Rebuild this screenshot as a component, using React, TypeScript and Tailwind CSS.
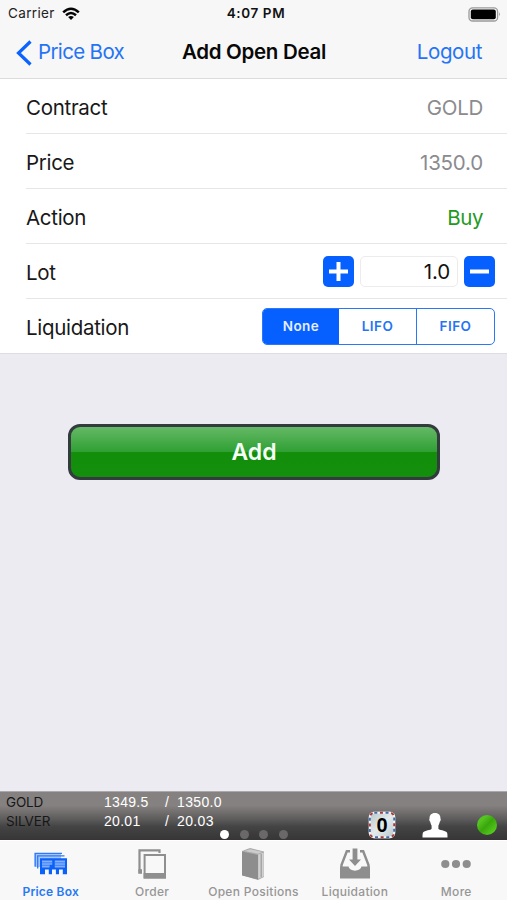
import { type ReactNode } from 'react';

const details = [
  { label: 'Contract', value: 'GOLD', color: 'text-[#8b8b8f]', tracking: 'tracking-[-0.3px]' },
  { label: 'Price', value: '1350.0', color: 'text-[#8b8b8f]', tracking: 'tracking-[-0.2px]' },
  { label: 'Action', value: 'Buy', color: 'text-[#1f9a1f]', tracking: 'tracking-[-0.4px]' },
];

const quotes = [
  { name: 'GOLD', bid: '1349.5', ask: '1350.0' },
  { name: 'SILVER', bid: '20.01', ask: '20.03' },
];

function StatusBar() {
  return (
    <div className="grid h-[27px] grid-cols-3 items-center pt-px pr-[6px] pl-2 text-[13.5px] leading-none">
      <div className="flex items-center gap-[7px]">
        <span className="tracking-[0.35px] text-[#222]">Carrier</span>
        <svg width="18" height="14" viewBox="0 0 18 14" fill="none" stroke="#050505" strokeWidth="2.5">
          <path d="M1.2 5.3 Q9 -1.8 16.8 5.3" />
          <path d="M4 8.2 Q9 3.8 14 8.2" />
          <path d="M9 13 L6.1 10.1 Q9 7.8 11.9 10.1 Z" fill="#050505" stroke="none" />
        </svg>
      </div>
      <span className="pl-[3px] text-center font-semibold tracking-[0.6px] whitespace-nowrap text-[#111]">4:07 PM</span>
      <svg className="justify-self-end" width="33" height="15" viewBox="0 0 33 15">
        <rect x="1" y="0.8" width="28.6" height="13.2" rx="3.6" fill="#f7f7f7" stroke="#9b9b9b" strokeWidth="1.3" />
        <rect x="2.8" y="2.6" width="25" height="9.6" rx="2" fill="#000" />
        <path d="M31 5.2 Q32.8 7.4 31 9.6 Z" fill="#777" />
      </svg>
    </div>
  );
}

function NavBar() {
  return (
    <div className="grid h-[52px] grid-cols-[160px_1fr_160px] items-center border-b border-[#dcdcdd] text-[20.5px] leading-none text-[#2474f5]">
      <div className="flex items-center gap-[6px] pl-4">
        <svg width="16" height="26" viewBox="0 0 16 26" fill="none" stroke="#0a63ff" strokeWidth="3.2">
          <path d="M14.5 1.5 L2.5 13 L14.5 24.5" />
        </svg>
        <span className="whitespace-nowrap tracking-[-0.65px]">Price Box</span>
      </div>
      <h1 className="pl-px text-center font-semibold whitespace-nowrap tracking-[-0.3px] text-[#080808]">Add Open Deal</h1>
      <span className="pr-[25px] text-right tracking-[-0.4px]">Logout</span>
    </div>
  );
}

function Row({ label, last, children }: { label: string; last?: boolean; children: ReactNode }) {
  return (
    <div className={`ml-[26px] flex h-[55px] items-center justify-between ${last ? '' : 'border-b border-[#e6e6e8]'}`}>
      <span className={`text-[20.5px] tracking-[-0.3px] text-[#181818] ${last ? 'pt-[3px]' : 'pt-[5px]'}`}>{label}</span>
      {children}
    </div>
  );
}

function StepButton({ minus }: { minus?: boolean }) {
  return (
    <button className="flex size-[31px] items-center justify-center rounded-[5px] bg-[#0660ff]">
      <svg width="19" height="19" viewBox="0 0 19 19" stroke="#fff" strokeWidth="4">
        <path d="M0 9.5 H19" />
        {!minus && <path d="M9.5 0 V19" />}
      </svg>
    </button>
  );
}

function Ticker() {
  return (
    <div className="relative h-[49px] border-t border-[#aaa8aa] bg-[linear-gradient(#858180_0%,#858180_28%,#5b5959_58%,#444_72%,#373535_100%)] font-['Liberation_Sans',sans-serif] text-[14px]">
      {quotes.map((q) => (
        <div key={q.name} className="grid h-[18.5px] grid-cols-[98px_61px_12px_60px] items-center pt-[2px] pl-[6px] leading-[16px] text-white">
          <span className="font-['Inter',sans-serif] text-[13.5px] tracking-[-0.15px] text-[#171717]">{q.name}</span>
          <span className="tracking-[0.3px]">{q.bid}</span>
          <span>/</span>
          <span className="tracking-[0.35px]">{q.ask}</span>
        </div>
      ))}
      {/* page dots and session indicators float over the quotes */}
      <div className="absolute top-[38px] left-[220px] flex gap-[10.5px]">
        <i className="size-[9px] rounded-full bg-white" />
        <i className="size-[9px] rounded-full bg-[#6a6868]" />
        <i className="size-[9px] rounded-full bg-[#6a6868]" />
        <i className="size-[9px] rounded-full bg-[#6a6868]" />
      </div>
      <div className="absolute top-[19px] right-[10px] flex items-center">
        <div className="relative mr-[26px] flex size-[28px] items-center justify-center">
          <svg className="absolute inset-0" width="28" height="28" viewBox="0 0 28 28">
            <defs>
              <linearGradient id="mail" x1="0" y1="0" x2="1" y2="1">
                <stop offset="0" stopColor="#b4c4c6" />
                <stop offset="0.5" stopColor="#e4eaec" />
                <stop offset="1" stopColor="#b8c5c9" />
              </linearGradient>
            </defs>
            <rect x="0.8" y="0.8" width="26.4" height="26.4" rx="5" fill="url(#mail)" />
            <rect x="1.8" y="1.8" width="24.4" height="24.4" rx="4.5" fill="none" stroke="#f1f4f5" strokeWidth="2" />
            <rect x="1.8" y="1.8" width="24.4" height="24.4" rx="4.5" fill="none" stroke="#4669a8" strokeWidth="2" strokeDasharray="3 8.25" />
            <rect x="1.8" y="1.8" width="24.4" height="24.4" rx="4.5" fill="none" stroke="#a83a3f" strokeWidth="2" strokeDasharray="3 8.25" strokeDashoffset="5.6" />
          </svg>
          <span className="relative font-['Liberation_Sans',sans-serif] text-[20px] leading-none font-bold text-black">0</span>
        </div>
        <svg className="mr-[29px]" width="26" height="26" viewBox="0 0 26 26" fill="#fff">
          <path d="M13 1 C9.2 1 7.4 3.3 7.6 6.6 C6.9 7 7.3 9.4 8.2 9.8 C8.6 11.7 9.2 12.9 9.6 13.5 V16.7 C9 18.4 2.8 18 1 20.6 C.5 21.6 .5 24 .5 25.5 H25.5 C25.5 24 25.5 21.6 25 20.6 C23.2 18 17 18.4 16.4 16.7 V13.5 C16.8 12.9 17.4 11.7 17.8 9.8 C18.7 9.4 19.1 7 18.4 6.6 C18.6 3.3 16.8 1 13 1 Z" />
        </svg>
        <span className="size-[20px] rounded-full bg-[linear-gradient(135deg,#54c420_25%,#3aa60c_50%,#55cb1e_85%)]" />
      </div>
    </div>
  );
}

function PriceBoxIcon() {
  return (
    <svg width="34" height="32" viewBox="0 0 34 32" fill="none">
      <path d="M0.5 5 H27 V11 H6 V19 H0.5 Z" fill="#a4c5fb" />
      <path d="M1.2 18.5 V5.4 H28 M3.7 20.5 V7.9 H30.5" stroke="#2f78f8" strokeWidth="1.3" />
      <path d="M6 10.3 H33 V26.3 H28.8 V21.5 H25 V26.3 H21.9 V21.5 H18 V26.3 H14.8 V21.5 H11 V26.3 H6 Z" fill="#0a62f8" />
      <path d="M8 12.5 H18.2 V16.7 H15.5 V19.5 H8 Z M20.8 12.5 H31 V19.5 H20.8 Z" fill="#82aefb" />
      <path d="M8 14.8 H18.2 M8 17.3 H15.5 M20.8 14.8 H31 M20.8 17.3 H31" stroke="#2f78f8" strokeWidth="0.8" />
    </svg>
  );
}

function OrderIcon() {
  return (
    <svg width="28" height="32" viewBox="0 0 28 32" fill="none" stroke="#8f8f8f">
      <path d="M4 24.5 H1.5 V2.3 H21.5 V5" strokeWidth="2.2" />
      <path d="M0.4 21.2 H4 V25.6 H0.4 Z" fill="#8f8f8f" stroke="none" />
      <rect x="6.6" y="7" width="20.4" height="22.5" fill="#f8f8f8" strokeWidth="2" />
      <path d="M5.6 25 H28 V30.5 H5.6 Z" fill="#8f8f8f" stroke="none" />
    </svg>
  );
}

function BookIcon() {
  return (
    <svg width="24" height="34" viewBox="0 0 24 34">
      <path d="M1 4 L9 1 L23 4.5 V30 L17 33 L1 28 Z" fill="#aaa" />
      <path d="M3.5 4 L9 2.2 L21.5 5 L17 6.7 Z" fill="#ccc" />
      <path d="M17.2 7.5 L22.8 5.5 V29.4 L17.2 31.8 Z" fill="#d0d0d0" />
      <path d="M20.2 6.7 V30.3" stroke="#999" strokeWidth="1.1" />
      <path d="M1 4.4 L17 8 V32.5 L1 28.5 Z" fill="#8d8d8d" />
    </svg>
  );
}

function TrayIcon() {
  return (
    <svg width="30" height="32" viewBox="0 0 30 32" fill="#8e8e8e">
      <path d="M10 3.2 H6.8 L1.5 17 V23 M20 3.2 H23.2 L28.5 17 V23" fill="none" stroke="#8e8e8e" strokeWidth="2.4" />
      <path d="M0 18.5 H8.6 C9.6 24 20.4 24 21.4 18.5 H30 V30.5 H0 Z" />
      <path d="M12.6 0.5 H17.4 V11.5 H21 L15 18 L9 11.5 H12.6 Z" />
    </svg>
  );
}

function MoreIcon() {
  return (
    <svg width="30" height="10" viewBox="0 0 30 10" fill="#8e8e8e">
      <circle cx="4.3" cy="5" r="4.1" />
      <circle cx="15" cy="5" r="4.1" />
      <circle cx="25.7" cy="5" r="4.1" />
    </svg>
  );
}

const tabs = [
  { label: 'Price Box', icon: PriceBoxIcon },
  { label: 'Order', icon: OrderIcon },
  { label: 'Open Positions', icon: BookIcon },
  { label: 'Liquidation', icon: TrayIcon },
  { label: 'More', icon: MoreIcon },
];

function TabBar() {
  return (
    <nav className="grid h-[60px] grid-cols-5 border-t border-white bg-[#f8f8f8]">
      {tabs.map((tab, index) => (
        <div key={tab.label} className="flex flex-col items-center pt-[6px]">
          <div className="flex h-[34px] items-center">
            <tab.icon />
          </div>
          <span className={`mt-[2px] text-[12px] leading-[18px] whitespace-nowrap ${index === 0 ? 'font-semibold tracking-[0.2px] text-[#2878f5]' : 'font-medium tracking-[0.3px] text-[#969696]'}`}>
            {tab.label}
          </span>
        </div>
      ))}
    </nav>
  );
}

export default function App() {
  return (
    <div className="flex h-[900px] w-[507px] flex-col overflow-hidden bg-[#ebebf1] font-['Inter',sans-serif]">
      <header className="bg-[#f7f7f7]">
        <StatusBar />
        <NavBar />
      </header>
      <section className="h-[275px] border-b border-[#dedee2] bg-white">
        {details.map((item) => (
          <Row key={item.label} label={item.label}>
            <span className={`pt-[5px] pr-[24px] text-[20.5px] ${item.tracking} ${item.color}`}>{item.value}</span>
          </Row>
        ))}
        <Row label="Lot">
          <div className="flex items-center gap-[6px] pr-3">
            <StepButton />
            <div className="flex h-[31px] w-[98px] items-center justify-end rounded-[5px] border border-[#ececee] pt-[2px] pr-[7px] text-[20.5px] tracking-[-0.1px] text-[#111]">
              1.0
            </div>
            <StepButton minus />
          </div>
        </Row>
        <Row label="Liquidation" last>
          <div className="mr-3 grid h-[37px] w-[233px] grid-cols-[76px_77px_78px] overflow-hidden rounded-[5px] border border-[#2b78f5] text-center text-[13.5px] leading-[35px] font-semibold tracking-[0.5px] text-[#2474f5]">
            <span className="bg-[#0660ff] text-[#e4eeff]">None</span>
            <span>LIFO</span>
            <span className="border-l border-[#2b78f5]">FIFO</span>
          </div>
        </Row>
      </section>
      <main className="flex-1 pt-[70px] pr-[67px] pl-[68px]">
        <button className="h-[56px] w-full rounded-[12px] border-3 border-[#343b3e] bg-[linear-gradient(#65b966_0%,#30a034_49%,#138e0b_51%,#148f0d_100%)] text-[23px] font-semibold text-[#f5fff5]">
          Add
        </button>
      </main>
      <Ticker />
      <TabBar />
    </div>
  );
}
